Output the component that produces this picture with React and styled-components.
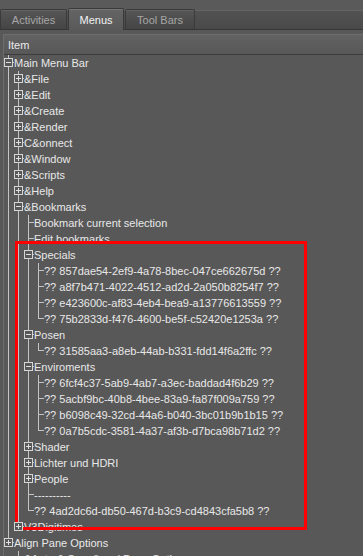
import React from "react";
import styled, { createGlobalStyle, css } from "styled-components";

const Global = createGlobalStyle`
  html, body { margin: 0; padding: 0; background: #585858; }
  body { font-family: "Liberation Sans", Arial, sans-serif; font-size: 11px; }
`;

const Page = styled.div`
  position: relative;
  width: 363px;
  height: 556px;
  overflow: hidden;
  background: #585858;
  color: #e8e8e8;
`;

const TabBar = styled.div`
  display: flex;
  align-items: flex-end;
  height: 30px;
  background: linear-gradient(
    to bottom,
    #5a5a5a 0px,
    #5a5a5a 10px,
    #646464 10px,
    #646464 11px,
    #525252 11px,
    #4a4a4a 29px,
    #363636 29px,
    #363636 30px
  );
`;

const Tab = styled.div`
  box-sizing: border-box;
  display: flex;
  align-items: center;
  justify-content: center;
  width: ${(p) => p.$w}px;
  height: ${(p) => (p.$active ? 22 : 20)}px;
  margin-bottom: ${(p) => (p.$active ? 0 : 1)}px;
  margin-right: 1px;
  border: 1px solid #3a3a3a;
  border-bottom: none;
  border-radius: 2px 2px 0 0;
  font-size: 11px;
  padding-top: 1px;
  ${(p) =>
    p.$active
      ? css`
          background: linear-gradient(to bottom, #646464, #5a5a5a);
          color: #f2f2f2;
          box-shadow: inset 0 1px 0 #777;
        `
      : css`
          background: linear-gradient(to bottom, #565656, #454545);
          color: #a6a6a6;
          box-shadow: inset 0 1px 0 #626262;
        `}
`;

const Panel = styled.div`
  margin-top: 4px;
  margin-left: 3px;
  border-left: 1px solid #6c6c6c;
`;

const Header = styled.div`
  box-sizing: border-box;
  height: 21px;
  display: flex;
  align-items: center;
  padding-left: 4px;
  border-top: 1px solid #6c6c6c;
  border-bottom: 1px solid #3c3c3c;
  background: linear-gradient(to bottom, #626262, #585858);
  color: #ececec;
  font-size: 11px;
`;

const Tree = styled.div`
  display: flex;
  flex-direction: column;
`;

const Row = styled.div`
  display: flex;
  align-items: stretch;
  height: 16px;
  white-space: nowrap;
`;

const lineColor = "#c4c4c4";

const Guide = styled.div`
  position: relative;
  flex: 0 0 10px;
  ${(p) =>
    p.$on &&
    css`
      &::before {
        content: "";
        position: absolute;
        left: 4px;
        top: 0;
        bottom: 0;
        width: 1px;
        background: ${lineColor};
      }
    `}
`;

const Connector = styled.div`
  position: relative;
  flex: 0 0 10px;
  &::before {
    content: "";
    position: absolute;
    left: 4px;
    top: 0;
    width: 1px;
    height: ${(p) => (p.$last ? "8px" : "16px")};
    background: ${lineColor};
  }
  &::after {
    content: "";
    position: absolute;
    left: 4px;
    top: 7px;
    width: 6px;
    height: 1px;
    background: ${lineColor};
  }
`;

const Box = styled.span`
  position: absolute;
  z-index: 1;
  left: 0;
  top: 3px;
  box-sizing: border-box;
  width: 9px;
  height: 9px;
  border: 1px solid #d6d6d6;
  background: #585858;
  &::before {
    content: "";
    position: absolute;
    left: 1px;
    top: 3px;
    width: 5px;
    height: 1px;
    background: #e0e0e0;
  }
  ${(p) =>
    p.$plus &&
    css`
      &::after {
        content: "";
        position: absolute;
        left: 3px;
        top: 1px;
        width: 1px;
        height: 5px;
        background: #e0e0e0;
      }
    `}
`;

const Label = styled.span`
  line-height: 16px;
  color: #e8e8e8;
  font-size: 11px;
`;

const Highlight = styled.div`
  position: absolute;
  left: 15px;
  top: 241px;
  width: 292px;
  height: 289px;
  box-sizing: border-box;
  border: 3px solid #ff0000;
  pointer-events: none;
`;

const leaf = (label) => ({ label });
const closed = (label) => ({ label, sign: "plus" });

const data = [
  {
    label: "Main Menu Bar",
    children: [
      closed("&File"),
      closed("&Edit"),
      closed("&Create"),
      closed("&Render"),
      closed("C&onnect"),
      closed("&Window"),
      closed("&Scripts"),
      closed("&Help"),
      {
        label: "&Bookmarks",
        children: [
          leaf("Bookmark current selection"),
          leaf("Edit bookmarks"),
          {
            label: "Specials",
            children: [
              leaf("?? 857dae54-2ef9-4a78-8bec-047ce662675d ??"),
              leaf("?? a8f7b471-4022-4512-ad2d-2a050b8254f7 ??"),
              leaf("?? e423600c-af83-4eb4-bea9-a13776613559 ??"),
              leaf("?? 75b2833d-f476-4600-be5f-c52420e1253a ??"),
            ],
          },
          {
            label: "Posen",
            children: [leaf("?? 31585aa3-a8eb-44ab-b331-fdd14f6a2ffc ??")],
          },
          {
            label: "Enviroments",
            children: [
              leaf("?? 6fcf4c37-5ab9-4ab7-a3ec-baddad4f6b29 ??"),
              leaf("?? 5acbf9bc-40b8-4bee-83a9-fa87f009a759 ??"),
              leaf("?? b6098c49-32cd-44a6-b040-3bc01b9b1b15 ??"),
              leaf("?? 0a7b5cdc-3581-4a37-af3b-d7bca98b71d2 ??"),
            ],
          },
          closed("Shader"),
          closed("Lichter und HDRI"),
          closed("People"),
          leaf("----------"),
          leaf("?? 4ad2dc6d-db50-467d-b3c9-cd4843cfa5b8 ??"),
        ],
      },
      closed("V3Digitimes"),
    ],
  },
  {
    label: "Align Pane Options",
    sign: "plus",
    children: [leaf("&Auto & Save/Load Pane Options")],
  },
];

function flatten(nodes, guides, out) {
  nodes.forEach((n, i) => {
    const last = i === nodes.length - 1;
    out.push({ label: n.label, guides, last, sign: n.sign || (n.children ? "minus" : null) });
    if (n.children) flatten(n.children, [...guides, !last], out);
  });
  return out;
}

const rows = flatten(data, [], []);

export default function App() {
  return (
    <Page>
      <Global />
      <TabBar>
        <Tab $w={67}>Activities</Tab>
        <Tab $w={56} $active>Menus</Tab>
        <Tab $w={70}>Tool Bars</Tab>
      </TabBar>
      <Panel>
        <Header>Item</Header>
        <Tree>
          {rows.map((r, i) => (
            <Row key={i}>
              {r.guides.map((g, k) => (
                <Guide key={k} $on={g} />
              ))}
              <Connector $last={r.last}>
                {r.sign && <Box $plus={r.sign === "plus"} />}
              </Connector>
              <Label>{r.label}</Label>
            </Row>
          ))}
        </Tree>
      </Panel>
      <Highlight />
    </Page>
  );
}
